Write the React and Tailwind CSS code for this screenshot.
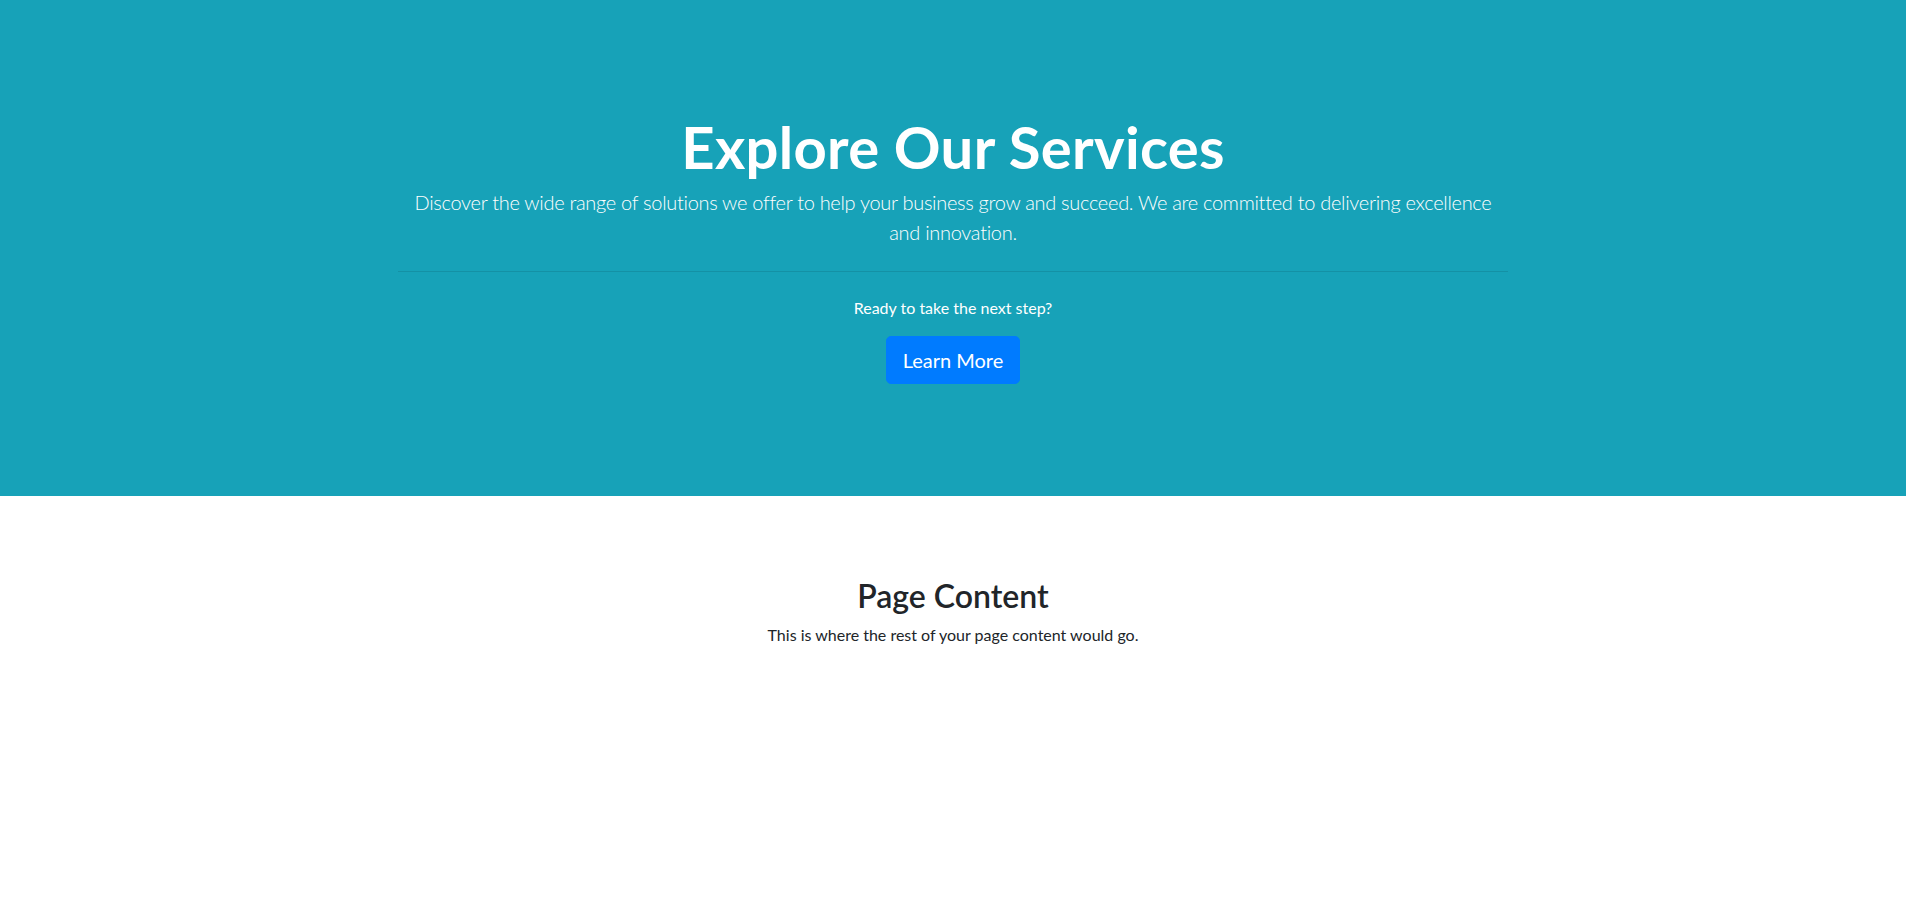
export default function App() {
  return (
    <div className="min-h-screen bg-white font-['Lato','Noto_Sans',sans-serif] text-[#212529]">
      {/* Hero */}
      <section className="bg-[#17a2b8] text-white pt-[112px] pb-[112px]">
        <div className="max-w-[1140px] mx-auto px-[15px] text-center">
          <h1 className="text-[58px] leading-[1.2] font-bold tracking-[0.3px] mb-[5px]">Explore Our Services</h1>
          <p className="text-[20px] leading-[1.5] font-light tracking-[-0.3px]">
            Discover the wide range of solutions we offer to help your business grow and succeed. We are committed to
            delivering excellence and innovation.
          </p>
          <hr className="mt-6 mb-6 border-t border-black/10" />
          <p className="text-base leading-6 mb-4">Ready to take the next step?</p>
          <button className="bg-[#007bff] border border-[#007bff] text-white text-[20px] leading-[1.5] px-4 py-2 rounded-[5px]">
            Learn More
          </button>
        </div>
      </section>

      {/* Content */}
      <main className="max-w-[1140px] mx-auto px-[15px] pt-[81px] text-center">
        <h2 className="text-[32px] leading-[1.2] font-semibold mb-2">Page Content</h2>
        <p className="text-base leading-6">This is where the rest of your page content would go.</p>
      </main>
    </div>
  );
}
